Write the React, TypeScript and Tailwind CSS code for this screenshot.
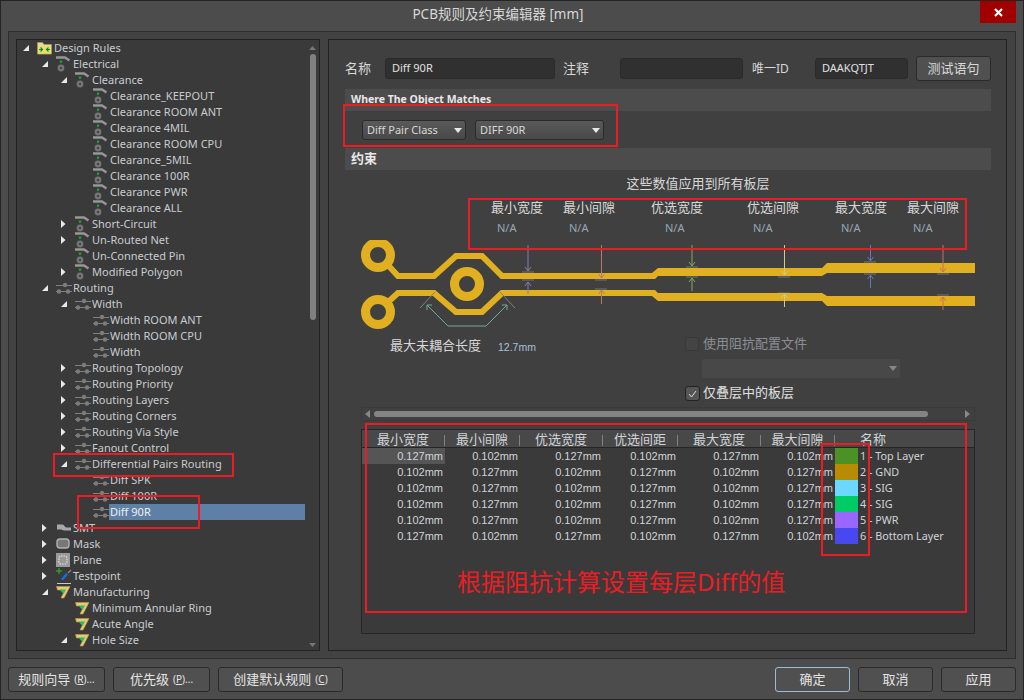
import React from "react";

const FONT = { fontFamily: '"Noto Sans", "Noto Sans CJK SC", sans-serif' };
const NUM_FONT = { fontFamily: '"Liberation Sans", "Noto Sans", sans-serif' };

type IconKind = "folder" | "rule" | "route" | "smt" | "mask" | "plane" | "test" | "mfg";
type Row = { level: number; label: string; icon: IconKind; arrow?: "open" | "closed"; selected?: boolean };

const treeRows: Row[] = [
  { level: 0, label: "Design Rules", icon: "folder", arrow: "open" },
  { level: 1, label: "Electrical", icon: "rule", arrow: "open" },
  { level: 2, label: "Clearance", icon: "rule", arrow: "open" },
  { level: 3, label: "Clearance_KEEPOUT", icon: "rule" },
  { level: 3, label: "Clearance ROOM ANT", icon: "rule" },
  { level: 3, label: "Clearance 4MIL", icon: "rule" },
  { level: 3, label: "Clearance ROOM CPU", icon: "rule" },
  { level: 3, label: "Clearance_5MIL", icon: "rule" },
  { level: 3, label: "Clearance 100R", icon: "rule" },
  { level: 3, label: "Clearance PWR", icon: "rule" },
  { level: 3, label: "Clearance ALL", icon: "rule" },
  { level: 2, label: "Short-Circuit", icon: "rule", arrow: "closed" },
  { level: 2, label: "Un-Routed Net", icon: "rule", arrow: "closed" },
  { level: 2, label: "Un-Connected Pin", icon: "rule" },
  { level: 2, label: "Modified Polygon", icon: "rule", arrow: "closed" },
  { level: 1, label: "Routing", icon: "route", arrow: "open" },
  { level: 2, label: "Width", icon: "route", arrow: "open" },
  { level: 3, label: "Width ROOM ANT", icon: "route" },
  { level: 3, label: "Width ROOM CPU", icon: "route" },
  { level: 3, label: "Width", icon: "route" },
  { level: 2, label: "Routing Topology", icon: "route", arrow: "closed" },
  { level: 2, label: "Routing Priority", icon: "route", arrow: "closed" },
  { level: 2, label: "Routing Layers", icon: "route", arrow: "closed" },
  { level: 2, label: "Routing Corners", icon: "route", arrow: "closed" },
  { level: 2, label: "Routing Via Style", icon: "route", arrow: "closed" },
  { level: 2, label: "Fanout Control", icon: "route", arrow: "closed" },
  { level: 2, label: "Differential Pairs Routing", icon: "route", arrow: "open" },
  { level: 3, label: "Diff SPK", icon: "route" },
  { level: 3, label: "Diff 100R", icon: "route" },
  { level: 3, label: "Diff 90R", icon: "route", selected: true },
  { level: 1, label: "SMT", icon: "smt", arrow: "closed" },
  { level: 1, label: "Mask", icon: "mask", arrow: "closed" },
  { level: 1, label: "Plane", icon: "plane", arrow: "closed" },
  { level: 1, label: "Testpoint", icon: "test", arrow: "closed" },
  { level: 1, label: "Manufacturing", icon: "mfg", arrow: "open" },
  { level: 2, label: "Minimum Annular Ring", icon: "mfg" },
  { level: 2, label: "Acute Angle", icon: "mfg" },
  { level: 2, label: "Hole Size", icon: "mfg", arrow: "open" },
  { level: 3, label: "", icon: "mfg" },
];

const layerRows = [
  ["0.127mm", "0.102mm", "0.127mm", "0.102mm", "0.127mm", "0.102mm", "#4a9126", "1 - Top Layer"],
  ["0.102mm", "0.127mm", "0.102mm", "0.127mm", "0.102mm", "0.127mm", "#b88c00", "2 - GND"],
  ["0.102mm", "0.127mm", "0.102mm", "0.127mm", "0.102mm", "0.127mm", "#6cd8ff", "3 - SIG"],
  ["0.102mm", "0.127mm", "0.102mm", "0.127mm", "0.102mm", "0.127mm", "#00cc66", "4 - SIG"],
  ["0.102mm", "0.127mm", "0.102mm", "0.127mm", "0.102mm", "0.127mm", "#9966ff", "5 - PWR"],
  ["0.127mm", "0.102mm", "0.127mm", "0.102mm", "0.127mm", "0.102mm", "#4848f0", "6 - Bottom Layer"],
];

const headers = ["最小宽度", "最小间隙", "优选宽度", "优选间距", "最大宽度", "最大间隙"];

const limits: [string, number, number][] = [
  ["最小宽度", 146, 152],
  ["最小间隙", 218, 224],
  ["优选宽度", 306, 320],
  ["优选间隙", 402, 408],
  ["最大宽度", 490, 496],
  ["最大间隙", 562, 568],
];

function TreeIcon({ kind }: { kind: IconKind }) {
  if (kind === "folder")
    return (
      <svg width="15" height="14" viewBox="0 0 15 14">
        <path d="M0.5 1.5h5l1.5 2h7.5v9.5h-14z" fill="#e8d9a0" stroke="#a89058" />
        <rect x="1" y="5" width="13" height="7.5" fill="#e6e070" />
        <path d="M2 8.5h4M3.5 6.5l2 2-2 2M13 8.5H9M11.5 6.5l-2 2 2 2" stroke="#1c8a2c" strokeWidth="1.2" fill="none" />
      </svg>
    );
  if (kind === "rule")
    return (
      <svg width="15" height="16" viewBox="0 0 15 16">
        <path d="M0 1.500h9l4.500 3" stroke="#969696" strokeWidth="2.400" fill="none" />
        <path d="M5 4l1.600 1.800L5 7.600 3.400 5.800z" fill="#14a830" />
        <circle cx="5" cy="12" r="3.400" fill="#747474" />
        <circle cx="5" cy="12" r="1.100" fill="#3a3a3a" />
      </svg>
    );
  if (kind === "route")
    return (
      <svg width="16" height="12" viewBox="0 0 16 12">
        <path d="M0 3.500h16M0 9.500h16" stroke="#808080" strokeWidth="1" />
        <circle cx="9" cy="3" r="2.200" fill="#7c7c7c" />
        <circle cx="3" cy="9.500" r="2.200" fill="#7c7c7c" />
        <circle cx="12" cy="9.500" r="2.200" fill="#7c7c7c" />
      </svg>
    );
  if (kind === "smt")
    return (
      <svg width="16" height="10" viewBox="0 0 16 10">
        <path d="M1 1.500h6l3 3h5v3H8L5 6.500H1z" fill="#a8a8a8" />
      </svg>
    );
  if (kind === "mask")
    return (
      <svg width="14" height="12" viewBox="0 0 14 12">
        <rect x="1" y="1" width="12" height="9" rx="3" fill="#777" stroke="#b0b0b0" strokeWidth="1.400" />
      </svg>
    );
  if (kind === "plane")
    return (
      <svg width="14" height="14" viewBox="0 0 14 14">
        <rect width="14" height="14" fill="#9a9a9a" />
        <rect x="3" y="3" width="8" height="8" rx="2" fill="none" stroke="#e0e0e0" strokeWidth="1.200" strokeDasharray="1.500 1" />
      </svg>
    );
  if (kind === "test")
    return (
      <svg width="16" height="16" viewBox="0 0 16 16">
        <path d="M3 0v6M0 3h6" stroke="#20c030" strokeWidth="1" />
        <path d="M5 11l5-6 2 1.500-5 6z" fill="#1c6ae0" />
        <path d="M12 5l3-3" stroke="#888" strokeWidth="1.200" />
        <path d="M1 15.500h14" stroke="#c8c8c8" strokeWidth="1" />
      </svg>
    );
  return (
    <svg width="15" height="14" viewBox="0 0 15 14">
      <path d="M0.500 1.500h13.500l-6 11.500h-3l4-8H1.500z" fill="#e8c878" stroke="#c09a40" strokeWidth="0.600" />
      <path d="M3.500 4.500h6.500l-2.500 4.500z" fill="#18c868" />
    </svg>
  );
}

function Expander({ type }: { type: "open" | "closed" }) {
  if (type === "open")
    return (
      <svg width="6" height="6" viewBox="0 0 6 6">
        <path d="M6 0v6H0z" fill="#e8e8e8" />
      </svg>
    );
  return (
    <svg width="5" height="8" viewBox="0 0 5 8">
      <path d="M0 0l4.500 4L0 8z" fill="#e8e8e8" />
    </svg>
  );
}

function TreeRow({ row }: { row: Row }) {
  const indent = [6, 25, 44, 62][row.level];
  return (
    <div className="flex h-4 shrink-0 items-center" style={{ paddingLeft: indent }}>
      <div className="flex w-[14px] shrink-0 items-center">
        {row.arrow && <Expander type={row.arrow} />}
      </div>
      <div className="flex w-4 shrink-0 items-center">
        <TreeIcon kind={row.icon} />
      </div>
      <div
        className={
          row.selected
            ? "flex h-4 w-[196px] items-center bg-[#5e80a6] pl-px text-[11px] text-[#f0f0f0]"
            : "flex h-4 items-center pl-px text-[11px] whitespace-nowrap text-[#c8ccd0]"
        }
      >
        {row.label}
      </div>
    </div>
  );
}

function RedBox({ className }: { className: string }) {
  return <div className={"pointer-events-none absolute border-2 border-[#ed1c24] " + className} />;
}

function Caret({ color = "#e8e8e8" }: { color?: string }) {
  return (
    <svg width="8" height="5" viewBox="0 0 8 5">
      <path d="M0 0h8L4 5z" fill={color} />
    </svg>
  );
}

function SelectBox({ label, width }: { label: string; width: string }) {
  return (
    <div
      className={
        "flex h-[20px] items-center justify-between rounded-[3px] border border-[#2a2a2a] bg-gradient-to-b from-[#5a5a5a] to-[#484848] pr-[3px] pl-1 text-[11px] text-[#d8d8d8] " +
        width
      }
    >
      {label}
      <Caret />
    </div>
  );
}

function TextInput({ value, width }: { value?: string; width: string }) {
  return (
    <div
      className={
        "flex h-[21px] items-center rounded-[3px] border border-[#2a2a2a] bg-[#303030] pl-[6px] text-[11px] text-[#e0e0e0] " +
        width
      }
    >
      {value}
    </div>
  );
}

function FootButton({ children, width, focused }: { children: React.ReactNode; width: string; focused?: boolean }) {
  return (
    <div
      className={
        "flex h-[25px] items-center justify-center rounded-[3px] border bg-[#505050] text-[13px] text-[#e4e4e4] " +
        (focused ? "border-[#9dbbd8] " : "border-[#2a2a2a] ") +
        width
      }
    >
      {children}
    </div>
  );
}

function Diagram() {
  const gold = "#e0b020";
  const arrows = [
    { x: 168, a: 31, b: 42, e: 54, c: "#7d80b0" },
    { x: 241.500, a: 38, b: 50, e: 64, c: "#b87a6c" },
    { x: 332, a: 26, b: 38, e: 51, c: "#80a85c" },
    { x: 424.500, a: 35, b: 54, e: 67, c: "#d0cc80" },
    { x: 510.500, a: 21, b: 35, e: 48, c: "#6c74c0" },
    { x: 583, a: 32, b: 57, e: 70, c: "#c87060" },
  ];
  // coordinates: x - 360, y - 240
  return (
    <svg width="615" height="95" viewBox="0 0 615 95" className="block">
      <g fill="#5a5a5a">
        <rect x="162" y="31" width="12" height="10" />
        <rect x="235" y="37" width="12" height="4" />
        <rect x="235" y="48" width="12" height="4" />
        <rect x="326" y="26" width="12" height="12" />
        <rect x="418" y="34" width="12" height="4" />
        <rect x="418" y="52" width="12" height="4" />
        <rect x="504" y="21" width="12" height="14" />
        <rect x="577" y="31" width="12" height="4" />
        <rect x="577" y="54" width="12" height="4" />
      </g>
      <g fill="none" stroke={gold} strokeLinejoin="miter">
        <circle cx="18" cy="15" r="12.500" strokeWidth="9" />
        <circle cx="18" cy="72" r="12.500" strokeWidth="9" />
        <circle cx="107" cy="44" r="12.500" strokeWidth="9" />
        <path d="M27 24l11 12h36l22-20h26l20 20h150" strokeWidth="6" />
        <path d="M27 63l11-10h36l22 19h26l20-19h150" strokeWidth="6" />
      </g>
      <g fill={gold}>
        <path d="M290 33H292L298 28H462L467 23H615V33H467L462 36H298L295 39H290Z" />
        <path d="M290 50H295L298 53H462L467 56H615V66H467L462 61H298L292 56H290Z" />
      </g>
      {arrows.map((a) => (
        <g key={a.x} stroke={a.c} strokeWidth="1" fill="none">
          <path d={`M${a.x} 5V${a.a}M${a.x - 3} ${a.a - 4}l3 4 3-4`} />
          <path d={`M${a.x} ${a.e}V${a.b}M${a.x - 3} ${a.b + 4}l3-4 3 4`} />
        </g>
      ))}
      <path d="M60 68l15-16M140 52l15 16" stroke="#808080" strokeWidth="1" />
      <path d="M67 65l21 21h38l21-21M67 65v5M67 65h5M147 65v5M147 65h-5" stroke="#70a89c" strokeWidth="1" fill="none" />
    </svg>
  );
}

export default function App() {
  return (
    <div className="relative h-[700px] w-[1024px] overflow-hidden border border-[#242424] bg-[#4c4c4c]" style={FONT}>
      {/* title bar */}
      <div className="relative flex h-[30px] items-center justify-center pr-[28px] pb-[3px] text-[13.5px] text-[#d8d8d8]">
        PCB规则及约束编辑器 [mm]
        <div className="absolute top-0 right-[7px] flex h-[22px] w-9 items-center justify-center bg-[#a00000]">
          <svg width="9" height="9" viewBox="0 0 9 9">
            <path d="M1 1l7 7M8 1l-7 7" stroke="#fff" strokeWidth="2.200" />
          </svg>
        </div>
      </div>

      {/* outer panel */}
      <div className="mx-[7px] flex h-[628px] gap-2 border border-[#2e2e2e] bg-[#424242] p-[7px]">
        {/* rules tree */}
        <div className="relative flex h-[612px] w-[304px] shrink-0 flex-col overflow-hidden border border-[#222] bg-[#3a3a3a]">
          {treeRows.map((row, i) => (
            <TreeRow key={i} row={row} />
          ))}
          <div className="absolute top-[6px] right-[3px] bottom-[3px] flex w-[7px] flex-col items-center">
            <svg width="7" height="4" viewBox="0 0 7 4">
              <path d="M0 4l3.500-4L7 4z" fill="#777" />
            </svg>
            <div className="mt-1 h-[266px] w-[6px] rounded-[3px] bg-[#808080]" />
            <div className="flex-1" />
            <svg width="7" height="4" viewBox="0 0 7 4">
              <path d="M0 0h7L3.500 4z" fill="#777" />
            </svg>
          </div>
        </div>

        {/* rule details */}
        <div className="h-[612px] w-[679px] shrink-0 border border-[#222] bg-[#404040] pl-4 text-[13px] text-[#d8d8d8]">
          <div className="mt-4 flex h-[25px] items-center">
            <span className="w-[40px]">名称</span>
            <TextInput value="Diff 90R" width="w-[170px]" />
            <span className="ml-2 w-[57px]">注释</span>
            <TextInput width="w-[123px]" />
            <span className="ml-[9px] w-[63px] text-[12px]">唯一ID</span>
            <TextInput value="DAAKQTJT" width="w-[93px]" />
            <div className="ml-2 flex h-[25px] w-[75px] items-center justify-center rounded-[3px] border border-[#2a2a2a] bg-[#505050]">
              测试语句
            </div>
          </div>

          <div className="mt-2 flex h-[22px] w-[646px] items-center bg-[#4c4c4c] pl-[6px] text-[10.5px] font-bold text-[#e8e8e8]">
            Where The Object Matches
          </div>
          <div className="mt-[9px] flex gap-[9px] pl-[17px]">
            <SelectBox label="Diff Pair Class" width="w-[104px]" />
            <SelectBox label="DIFF 90R" width="w-[129px]" />
          </div>
          <div className="mt-2 flex h-[22px] w-[646px] items-center bg-[#4c4c4c] pb-px pl-[6px] text-[13px] font-bold text-[#e8e8e8]">
            约束
          </div>

          <div className="mt-[6px] flex h-4 w-[706px] items-center justify-center">这些数值应用到所有板层</div>

          <div className="relative mt-[7px] h-[36px]">
            {limits.map(([label, lx, nx]) => (
              <React.Fragment key={label}>
                <span className="absolute top-0 leading-4" style={{ left: lx }}>
                  {label}
                </span>
                <span className="absolute top-[21px] text-[11px] leading-4 text-[#98a8b8]" style={{ left: nx }}>
                  N/A
                </span>
              </React.Fragment>
            ))}
          </div>

          <div className="mt-[5px] ml-[15px]">
            <Diagram />
          </div>

          <div className="mt-[2px] flex h-[64px]">
            <div className="flex h-[18px] w-[340px] shrink-0 items-center pt-[1px] pl-[45px]">
              <span className="mt-[-1px] w-[108px]">最大未耦合长度</span>
              <span className="mt-[3px] text-[10.5px] text-[#a8c0d8]" style={NUM_FONT}>
                12.7mm
              </span>
            </div>
            <div className="flex flex-col">
              <div className="flex h-[14px] items-center">
                <div className="h-[14px] w-[14px] rounded-[3px] border border-[#383838] bg-[#444]" />
                <span className="ml-1 text-[#8a8f94]">使用阻抗配置文件</span>
              </div>
              <div className="mt-2 ml-[17px] flex h-[19px] w-[198px] items-center justify-end rounded-[2px] bg-[#484848] pr-[3px]">
                <Caret color="#888" />
              </div>
              <div className="mt-2 flex h-[15px] items-center">
                <div className="flex h-[15px] w-[15px] items-center justify-center rounded-[3px] border border-[#222] bg-[#555]">
                  <svg width="9" height="8" viewBox="0 0 9 8">
                    <path d="M1 4l2.500 3L8 1" stroke="#ddd" strokeWidth="1" fill="none" />
                  </svg>
                </div>
                <span className="mt-[-2px] ml-[3px] text-[#e0e0e0]">仅叠层中的板层</span>
              </div>
            </div>
          </div>

          <div className="mt-[6px] ml-[16px] flex h-[14px] w-[614px] items-center border border-[#3a3a3a]">
            <svg className="ml-[3px]" width="5" height="8" viewBox="0 0 5 8">
              <path d="M5 0v8L0 4z" fill="#888" />
            </svg>
            <div className="ml-[4px] h-[6px] w-[554px] rounded-[3px] bg-[#848484]" />
            <div className="flex-1" />
            <svg className="mr-[4px]" width="5" height="8" viewBox="0 0 5 8">
              <path d="M0 0v8l5-4z" fill="#888" />
            </svg>
          </div>

          {/* per layer table */}
          <div className="mt-2 ml-4 h-[205px] w-[614px] border border-[#262626] bg-[#3a3a3a] text-[11px] text-[#d0d4d8]">
            <div className="grid h-[18px] grid-cols-[83px_75px_83px_75px_83px_74px_1fr] border-b border-[#262626] bg-[#484848] text-[13px]">
              {headers.map((h) => (
                <div key={h} className="flex items-center">
                  <span className="flex-1 pb-[2px] text-center">{h}</span>
                  <span className="h-[11px] w-px bg-[#808080]" />
                </div>
              ))}
              <div className="flex items-center pb-[2px] pl-[25px]">名称</div>
            </div>
            {layerRows.map((row, i) => (
              <div key={i} className="grid h-4 grid-cols-[83px_75px_83px_75px_83px_74px_1fr] items-center">
                {row.slice(0, 6).map((v, j) => (
                  <div
                    key={j}
                    style={NUM_FONT}
                    className={
                      i === 0 && j === 0
                        ? "flex h-4 items-center justify-end bg-[#555] pr-[2px]"
                        : "flex h-4 items-center justify-end pr-[2px]"
                    }
                  >
                    {v}
                  </div>
                ))}
                <div className="flex h-4 items-center">
                  <div className="h-4 w-[23px]" style={{ backgroundColor: row[6] }} />
                  <span className="ml-[2px] text-[10.8px]">{row[7]}</span>
                </div>
              </div>
            ))}
          </div>
        </div>
      </div>

      {/* footer buttons */}
      <div className="mt-2 flex items-center px-[7px]">
        <div className="flex gap-2">
          <FootButton width="w-[97px]">
            规则向导
            <span className="ml-1 text-[10px]">
              (<span className="underline">R</span>)...
            </span>
          </FootButton>
          <FootButton width="w-[97px]">
            优先级
            <span className="ml-1 text-[10px]">
              (<span className="underline">P</span>)...
            </span>
          </FootButton>
          <FootButton width="w-[125px]">
            创建默认规则
            <span className="ml-1 text-[10px]">
              (<span className="underline">C</span>)
            </span>
          </FootButton>
        </div>
        <div className="ml-auto flex gap-2">
          <FootButton width="w-[75px]" focused>
            确定
          </FootButton>
          <FootButton width="w-[75px]">取消</FootButton>
          <FootButton width="w-[75px]">应用</FootButton>
        </div>
      </div>

      {/* annotations from the original screenshot */}
      <RedBox className="top-[452px] left-[52px] h-[24px] w-[181px]" />
      <RedBox className="top-[494px] left-[76px] h-[34px] w-[123px]" />
      <RedBox className="top-[103px] left-[342px] h-[43px] w-[275px]" />
      <RedBox className="top-[197px] left-[467px] h-[52px] w-[499px]" />
      <RedBox className="top-[422px] left-[364px] h-[190px] w-[602px]" />
      <RedBox className="top-[442px] left-[820px] h-[113px] w-[49px]" />
      <div className="absolute top-[566px] left-[456px] text-[24px] leading-[30px] whitespace-nowrap text-[#ed1c24]">
        根据阻抗计算设置每层Diff的值
      </div>
    </div>
  );
}
